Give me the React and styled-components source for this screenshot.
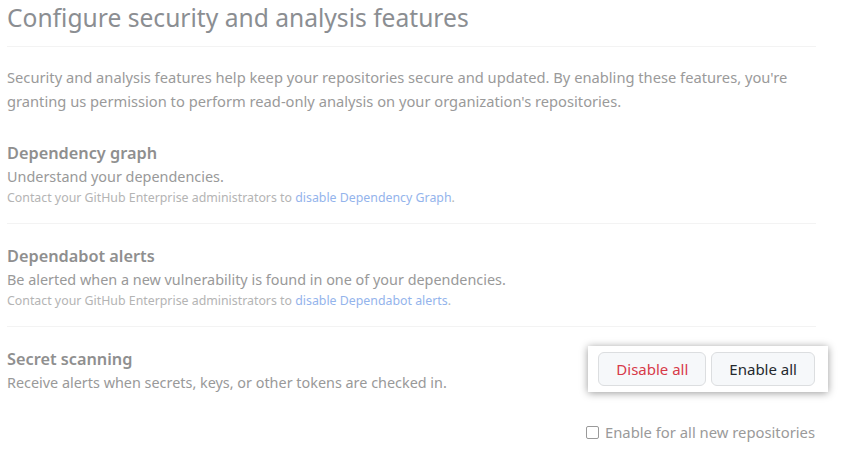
import React from "react";
import styled, { createGlobalStyle } from "styled-components";

const Global = createGlobalStyle`
  html, body { margin: 0; padding: 0; background: #fff; }
  body { font-family: "Noto Sans", "Open Sans", sans-serif; }
`;

const Page = styled.div`
  width: 809px;
  padding-left: 7px;
`;

const Title = styled.h1`
  margin: 0;
  font-size: 24.6px;
  line-height: 36px;
  font-weight: 400;
  color: #8b8e92;
  padding-bottom: 10px;
  border-bottom: 1px solid #f3f3f3;
`;

const Intro = styled.p`
  margin: 18px 0 8px;
  font-size: 14.7px;
  line-height: 24px;
  color: #9a9a9a;
  white-space: nowrap;
`;

const Section = styled.div`
  padding: 20px 0 16px;
  border-bottom: ${(p) => (p.$last ? "none" : "1px solid #f3f3f3")};
  display: flex;
  justify-content: space-between;
  align-items: flex-start;
`;

const Info = styled.div``;

const Name = styled.h3`
  margin: 0;
  font-size: 16.3px;
  line-height: 24px;
  font-weight: 600;
  color: #8f8f8f;
`;

const Desc = styled.div`
  font-size: 14.4px;
  line-height: 24px;
  color: #999;
`;

const Note = styled.div`
  font-size: 12.35px;
  line-height: 18px;
  color: #b4b4b4;
`;

const Link = styled.a`
  color: #94b4ec;
  text-decoration: none;
`;

const ButtonBox = styled.div`
  display: flex;
  gap: 5px;
  padding: 6px 13px 6px 10px;
  margin: -1px -12px 0 0;
  background: #fff;
  box-shadow: 0 1px 8px rgba(0, 0, 0, 0.4);
`;

const Button = styled.button`
  height: 34px;
  padding: 0 ${(p) => p.$px}px;
  font-family: "Noto Sans", "Open Sans", sans-serif;
  font-size: 15px;
  border: 1px solid #dcdee0;
  border-radius: 6px;
  background: #f6f8fa;
  color: ${(p) => (p.$danger ? "#d73a49" : "#24292e")};
  cursor: pointer;
`;

const CheckRow = styled.label`
  display: flex;
  justify-content: flex-end;
  align-items: center;
  gap: 6px;
  margin-top: 9px;
  padding-right: 1px;
  font-size: 14.8px;
  line-height: 24px;
  color: #9a9a9a;
`;

const Box = styled.span`
  width: 11px;
  height: 11px;
  border: 1px solid #9a9a9a;
  border-radius: 2px;
  background: #fff;
`;

export default function App() {
  return (
    <>
      <Global />
      <Page>
        <Title>Configure security and analysis features</Title>
        <Intro>
          Security and analysis features help keep your repositories secure and updated. By enabling these features, you're
          <br />
          granting us permission to perform read-only analysis on your organization's repositories.
        </Intro>
        <Section>
          <Info>
            <Name>Dependency graph</Name>
            <Desc>Understand your dependencies.</Desc>
            <Note>
              Contact your GitHub Enterprise administrators to <Link href="#">disable Dependency Graph</Link>.
            </Note>
          </Info>
        </Section>
        <Section>
          <Info>
            <Name>Dependabot alerts</Name>
            <Desc>Be alerted when a new vulnerability is found in one of your dependencies.</Desc>
            <Note>
              Contact your GitHub Enterprise administrators to <Link href="#">disable Dependabot alerts</Link>.
            </Note>
          </Info>
        </Section>
        <Section $last>
          <Info>
            <Name>Secret scanning</Name>
            <Desc>Receive alerts when secrets, keys, or other tokens are checked in.</Desc>
          </Info>
          <ButtonBox>
            <Button $danger $px={17}>Disable all</Button>
            <Button $px={17}>Enable all</Button>
          </ButtonBox>
        </Section>
        <CheckRow>
          <Box />
          Enable for all new repositories
        </CheckRow>
      </Page>
    </>
  );
}
